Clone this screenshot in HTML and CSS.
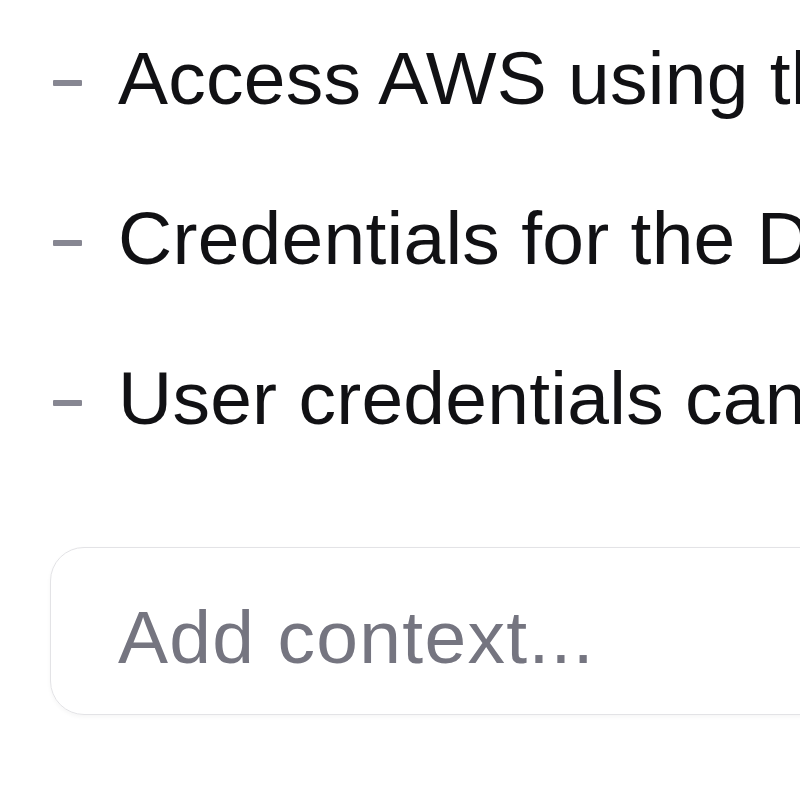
FILE: index.html
```html
<!DOCTYPE html>
<html lang="en">
<head>
<meta charset="utf-8">
<title>Context</title>
<link rel="stylesheet" href="styles.css">
</head>
<body>
<div class="page">
  <ul class="list">
    <li class="item"><span class="dash"></span><span class="text">Access AWS using the IAM Identity Center</span></li>
    <li class="item"><span class="dash"></span><span class="text">Credentials for the Developer role</span></li>
    <li class="item"><span class="dash"></span><span class="text">User credentials can be refreshed</span></li>
  </ul>
  <div class="input">
    <span class="placeholder">Add context...</span>
  </div>
</div>
</body>
</html>
```

FILE: styles.css
```css
html, body {
  margin: 0;
  padding: 0;
  background: #ffffff;
  overflow: hidden;
}
.page {
  width: 800px;
  height: 800px;
  overflow: hidden;
  font-family: "Liberation Sans", Arial, sans-serif;
  font-size: 75px;
  color: #111114;
}
.list {
  list-style: none;
  margin: 0;
  padding: 22px 0 0 53px;
  display: flex;
  flex-direction: column;
  gap: 48px;
}
.item {
  display: flex;
  align-items: center;
  height: 112px;
  line-height: 112px;
  white-space: nowrap;
  letter-spacing: 0.25px;
}
.dash {
  flex: none;
  width: 29px;
  height: 6px;
  border-radius: 1px;
  background: #878792;
  margin-right: 36px;
  margin-top: 10px;
}
.text {
  flex: none;
}
.input {
  margin: 93px 0 0 50px;
  width: 900px;
  border: 1px solid #e3e3e6;
  border-radius: 34px;
  box-shadow: 0 2px 4px rgba(0, 0, 0, 0.04);
  padding: 33px 0 0 67px;
  box-sizing: content-box;
  height: 133px;
  line-height: 112px;
  white-space: nowrap;
}
.placeholder {
  color: #757580;
  letter-spacing: 1.3px;
}
```
